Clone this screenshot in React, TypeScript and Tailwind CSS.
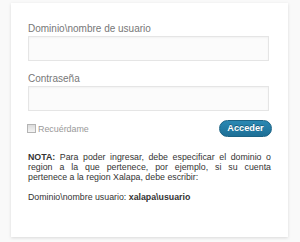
import React from "react";

export default function App() {
  return (
    <div className="w-[300px] h-[242px] bg-[#f9f9f9] pt-[3px] pl-[11px] font-['Liberation_Sans',Arial,sans-serif]">
      <div className="w-[277px] h-[234px] bg-white shadow-[0_1px_3px_rgba(0,0,0,0.13)] pt-[20px] pl-[17px] pr-[16px]">
        {/* usuario */}
        <label className="block h-[12px] text-[10px] leading-[12px] text-[#777]">
          Dominio\nombre de usuario
        </label>
        <div className="mt-[1px] w-[241px] h-[25px] bg-[#fbfbfb] border border-[#e5e5e5] shadow-[inset_0_1px_2px_rgba(0,0,0,0.04)]" />

        {/* contraseña */}
        <label className="block mt-[12px] h-[12px] text-[10px] leading-[12px] text-[#777]">
          Contraseña
        </label>
        <div className="mt-[1px] w-[241px] h-[25px] bg-[#fbfbfb] border border-[#e5e5e5] shadow-[inset_0_1px_2px_rgba(0,0,0,0.04)]" />

        <div className="mt-[9px] flex items-center justify-between h-[17px]">
          <div className="flex items-center -ml-[1px]">
            <span className="w-[9px] h-[9px] border border-[#b4b4b4] bg-gradient-to-b from-[#dcdcdc] to-[#f4f4f4]" />
            <span className="ml-[2px] text-[8.9px] leading-[10px] text-[#999]">Recuérdame</span>
          </div>
          <button className="w-[53px] h-[17px] rounded-full border border-[#1b6385] bg-gradient-to-b from-[#2a88b3] to-[#1d6f96] text-white text-[9.2px] font-bold leading-[15px] [text-shadow:0_-1px_0_rgba(0,0,0,0.3)]">
            Acceder
          </button>
        </div>

        <div className="mt-[15px] w-[243px] text-[8.8px] leading-[10px] text-[#333]">
          <p className="text-justify [text-align-last:justify]">
            <b>NOTA:</b> Para poder ingresar, debe especificar el dominio o
          </p>
          <p className="text-justify [text-align-last:justify]">
            region a la que pertenece, por ejemplo, si su cuenta
          </p>
          <p>pertenece a la region Xalapa, debe escribir:</p>
          <p className="mt-[10px]">
            Dominio\nombre usuario: <b>xalapa\usuario</b>
          </p>
        </div>
      </div>
    </div>
  );
}
